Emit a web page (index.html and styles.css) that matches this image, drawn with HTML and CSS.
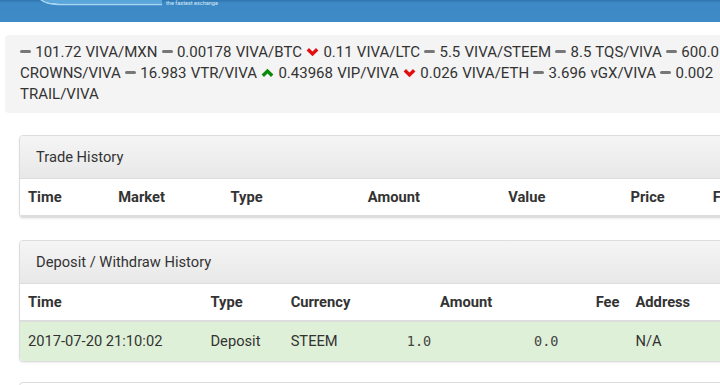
FILE: index.html
```html
<!DOCTYPE html>
<html>
<head>
<meta charset="utf-8">
<link rel="stylesheet" href="styles.css">
</head>
<body>
<header class="topbar">
  <div class="logo">
    <svg class="swoosh" width="130" height="8" viewBox="0 0 130 8">
      <path d="M0 0 Q6 5 18 5.2 L122 5.2 L122 3.4 L20 3.4 Q8 3.2 3 0 Z" fill="#a6d6f2"/>
      <path d="M3 0 Q8 3.2 20 3.4 L122 3.4 L122 0 Z" fill="#5aa5da"/>
    </svg>
    <span class="tagline">the fastest exchange</span>
  </div>
</header>
<main class="content">
  <div class="ticker">
    <span class="flat"></span> 101.72 VIVA/MXN <span class="flat"></span> 0.00178 VIVA/BTC <svg class="chev down" viewBox="0 0 13 10"><path d="M1.8 2.2 L6.5 6.9 L11.2 2.2"/></svg> 0.11 VIVA/LTC <span class="flat"></span> 5.5 VIVA/STEEM <span class="flat"></span> 8.5 TQS/VIVA <span class="flat"></span> 600.0 CROWNS/VIVA <span class="flat"></span> 16.983 VTR/VIVA <svg class="chev up" viewBox="0 0 13 10"><path d="M1.8 7.8 L6.5 3.1 L11.2 7.8"/></svg> 0.43968 VIP/VIVA <svg class="chev down" viewBox="0 0 13 10"><path d="M1.8 2.2 L6.5 6.9 L11.2 2.2"/></svg> 0.026 VIVA/ETH <span class="flat"></span> 3.696 vGX/VIVA <span class="flat"></span> 0.002 TRAIL/VIVA
  </div>

  <section class="panel">
    <div class="panel-heading">Trade History</div>
    <table class="grid trade">
      <colgroup>
        <col class="c90"><col class="c112"><col class="c137"><col class="c140"><col class="c122"><col class="c82"><col class="c100">
      </colgroup>
      <thead>
        <tr><th>Time</th><th>Market</th><th>Type</th><th>Amount</th><th>Value</th><th>Price</th><th>Fee</th></tr>
      </thead>
    </table>
  </section>

  <section class="panel">
    <div class="panel-heading">Deposit / Withdraw History</div>
    <table class="grid deposit">
      <colgroup>
        <col class="d182"><col class="d80"><col class="d100"><col class="d117"><col class="d127"><col class="d160">
      </colgroup>
      <thead>
        <tr><th>Time</th><th>Type</th><th>Currency</th><th class="right">Amount</th><th class="right">Fee</th><th>Address</th></tr>
      </thead>
      <tbody>
        <tr class="success"><td>2017-07-20 21:10:02</td><td>Deposit</td><td>STEEM</td><td class="mono">1.0</td><td class="mono">0.0</td><td>N/A</td></tr>
      </tbody>
    </table>
  </section>

  <section class="panel stub"></section>
</main>
</body>
</html>
```

FILE: styles.css
```css
html, body {
  margin: 0;
  padding: 0;
  overflow: hidden;
  background: #fff;
}
body {
  font-family: Roboto, "Liberation Sans", sans-serif;
  font-size: 14.7px;
  color: #333;
  width: 720px;
  height: 385px;
}
.topbar {
  height: 22px;
  background: linear-gradient(#2f75ae 0, #3d89c6 3px, #3f8bc8 100%);
  position: relative;
}
.logo {
  display: flex;
  align-items: flex-start;
  padding-left: 40px;
}
.swoosh {
  display: block;
}
.tagline {
  font-size: 5.6px;
  line-height: 7px;
  color: #d6e9f7;
  margin-left: -4px;
}
.content {
  padding: 13px 0 0 5px;
}
.ticker {
  width: 740px;
  background: #f4f4f4;
  border-radius: 4px;
  padding: 7px 15px 8px;
  font-size: 15px;
  line-height: 21px;
  color: #333;
  word-spacing: 0.5px;
}
.flat {
  display: inline-block;
  width: 11px;
  height: 3.5px;
  border-radius: 1.5px;
  background: #777;
  vertical-align: 4px;
}
.chev {
  width: 13px;
  height: 10px;
  vertical-align: 0;
  fill: none;
  stroke-width: 3.4;
  stroke-linecap: butt;
  stroke-linejoin: miter;
}
.chev.down { stroke: #e01010; }
.chev.up { stroke: #0a8a0a; }

.panel {
  width: 800px;
  margin: 22px 0 0 14px;
  border: 1px solid #ddd;
  border-radius: 4px;
  box-shadow: 0 1px 2px rgba(0,0,0,0.08);
  background: #fff;
  overflow: hidden;
}
.panel-heading {
  padding: 11px 16px;
  line-height: 20px;
  font-size: 14.7px;
  background: linear-gradient(#f5f5f5, #e8e8e8);
  border-bottom: 1px solid #ddd;
}
.grid {
  border-collapse: collapse;
  table-layout: fixed;
  width: 100%;
}
.grid th {
  text-align: left;
  font-weight: bold;
  padding: 8px 8px;
  line-height: 20px;
  border-bottom: 2px solid #ddd;
}
.grid td {
  padding: 10px 8px;
  line-height: 19px;
}
.grid th.right { text-align: right; }
.grid td.mono {
  text-align: right;
  padding-right: 69px;
  font-family: "DejaVu Sans Mono", monospace;
  font-size: 13.5px;
  color: #444;
}
.success td { background: #dff0d8; }
.c90 { width: 90px; }
.c112 { width: 112px; }
.c137 { width: 137px; }
.c140 { width: 140px; }
.c122 { width: 122px; }
.c82 { width: 82px; }
.c100 { width: 115px; }
.d182 { width: 182px; }
.d80 { width: 80px; }
.d100 { width: 100px; }
.d117 { width: 117px; }
.d127 { width: 127px; }
.d160 { width: 192px; }
.stub {
  height: 40px;
  margin-top: 20px;
}
```
